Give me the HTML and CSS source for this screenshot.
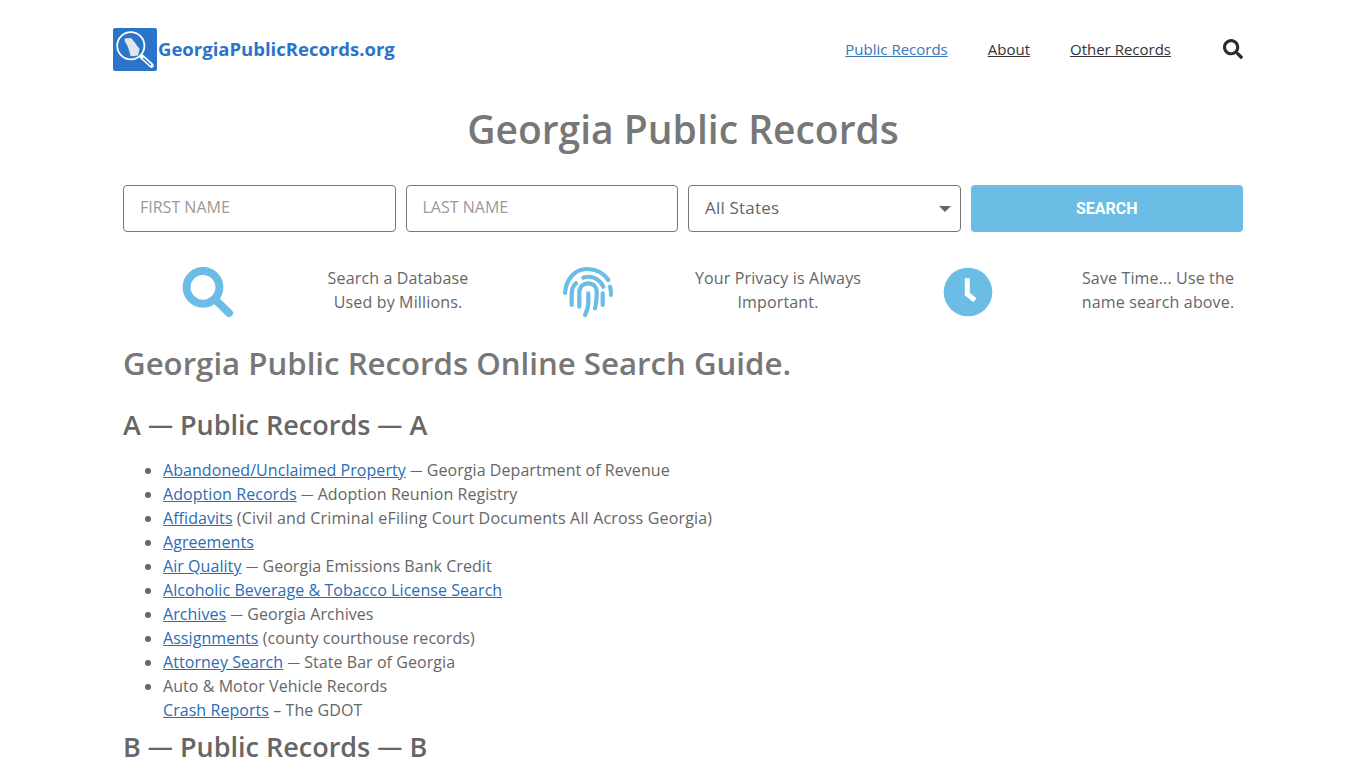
FILE: index.html
```html
<!DOCTYPE html>
<html lang="en">
<head>
<meta charset="utf-8">
<title>Georgia Public Records</title>
<link rel="stylesheet" href="styles.css">
</head>
<body>
<div class="page">
  <header class="site-header">
    <a class="logo" href="#">
      <svg class="logo-mark" viewBox="0 0 44 43" aria-hidden="true">
        <rect width="44" height="43" rx="2" fill="#2a75cb"/>
        <path d="M11.500 10.500l6.500-.5 3.500 4 3.500 5 1.500 1.500-.5 3-1 4-6 .8-1.500-.3-.8-3.500-2-6-3-5.500z" fill="#dfe6ee"/>
        <circle cx="17.800" cy="17.800" r="13.600" fill="none" stroke="#fff" stroke-width="1.800"/>
        <path d="M28.500 28.500L38.500 37.500" stroke="#fff" stroke-width="4.500" stroke-linecap="round"/>
        <path d="M30.500 30.500l7 6.300" stroke="#2a75cb" stroke-width="1.400" stroke-linecap="round"/>
      </svg>
      <span class="logo-text">GeorgiaPublicRecords.org</span>
    </a>
    <nav class="main-nav">
      <a class="nav-link is-active" href="#">Public Records</a>
      <a class="nav-link" href="#">About</a>
      <a class="nav-link" href="#">Other Records</a>
      <a class="nav-search" href="#" aria-label="Search">
        <svg viewBox="0 0 512 512" class="nav-search-icon" aria-hidden="true"><path fill="#2b2b2b" d="M505 442.700L405.300 343c-4.500-4.500-10.600-7-17-7H372c27.600-35.300 44-79.700 44-128C416 93.100 322.900 0 208 0S0 93.100 0 208s93.100 208 208 208c48.300 0 92.700-16.400 128-44v16.300c0 6.400 2.500 12.500 7 17l99.700 99.700c9.400 9.400 24.600 9.400 33.900 0l28.300-28.300c9.400-9.400 9.400-24.600.1-34zM208 336c-70.700 0-128-57.200-128-128 0-70.700 57.200-128 128-128 70.700 0 128 57.200 128 128 0 70.700-57.200 128-128 128z"/></svg>
      </a>
    </nav>
  </header>

  <main class="content">
    <h1 class="page-title">Georgia Public Records</h1>

    <form class="search-form">
      <input class="field" type="text" placeholder="FIRST NAME">
      <input class="field" type="text" placeholder="LAST NAME">
      <div class="select-wrap">
        <select class="field field-select"><option>All States</option></select>
      </div>
      <button class="search-btn" type="button">SEARCH</button>
    </form>

    <section class="features">
      <div class="feature-icon">
        <svg viewBox="0 0 52 52" class="icon" aria-hidden="true"><circle cx="21" cy="21.300" r="16.400" fill="none" stroke="#6bbde5" stroke-width="8"/><path d="M33.500 33.800L47 47" stroke="#6bbde5" stroke-width="8" stroke-linecap="round"/></svg>
      </div>
      <p class="feature-text">Search a Database<br>Used by Millions.</p>
      <div class="feature-icon">
        <svg viewBox="0 0 52 52" class="icon" aria-hidden="true"><g fill="none" stroke="#6bbde5" stroke-width="4.200" stroke-linecap="round"><path d="M3 27C4 13 13 3 25 3c9 0 16.500 4 21.300 11"/><path d="M21.300 11.700c7-2.500 15.500 0 20 9"/><path d="M48 20.700c.8 2.500 1 5.500 1 8.300"/><path d="M14 17.300c-3 2.500-4.300 6.500-4.300 10.500V39"/><path d="M17.300 40.700V26c0-5 4-8.700 9-8.700s8.400 3.500 8.400 8.400c0 5.500-.2 11-1.700 16.600"/><path d="M40.700 27.300V39"/><path d="M26.300 27.300v9c0 4.500-1.300 9-3.300 12.700"/></g></svg>
      </div>
      <p class="feature-text">Your Privacy is Always<br>Important.</p>
      <div class="feature-icon">
        <svg viewBox="0 0 52 52" class="icon" aria-hidden="true"><circle cx="26" cy="26" r="24.300" fill="#6bbde5"/><path d="M25.300 12.300V28l7.700 6.300" fill="none" stroke="#fff" stroke-width="5"/></svg>
      </div>
      <p class="feature-text">Save Time... Use the<br>name search above.</p>
    </section>

    <h2 class="guide-title">Georgia Public Records Online Search Guide.</h2>

    <h3 class="section-title">A <span class="dash">—</span> Public Records <span class="dash">—</span> A</h3>
    <ul class="record-list">
      <li><a href="#">Abandoned/Unclaimed Property</a> <span class="dash">—</span> Georgia Department of Revenue</li>
      <li><a href="#">Adoption Records</a> <span class="dash">—</span> Adoption Reunion Registry</li>
      <li><a href="#">Affidavits</a> <span class="note">(Civil and Criminal eFiling Court Documents All Across Georgia)</span></li>
      <li><a href="#">Agreements</a></li>
      <li><a href="#">Air Quality</a> <span class="dash">—</span> Georgia Emissions Bank Credit</li>
      <li><a href="#">Alcoholic Beverage &amp; Tobacco License Search</a></li>
      <li><a href="#">Archives</a> <span class="dash">—</span> Georgia Archives</li>
      <li><a href="#">Assignments</a> (county courthouse records)</li>
      <li><a href="#">Attorney Search</a> <span class="dash">—</span> State Bar of Georgia</li>
      <li>Auto &amp; Motor Vehicle Records<br><a href="#">Crash Reports</a> – The GDOT</li>
    </ul>
    <h3 class="section-title section-title-next">B <span class="dash">—</span> Public Records <span class="dash">—</span> B</h3>
  </main>
</div>
</body>
</html>
```
FILE: styles.css
```css
* { box-sizing: border-box; }
html, body { margin: 0; padding: 0; }
body {
  font-family: "Open Sans", "Noto Sans", sans-serif;
  font-size: 16px;
  line-height: 24px;
  letter-spacing: .06px;
  color: #666;
  background: #fff;
  height: 768px;
  overflow: hidden;
}
a { color: #2a6db5; }
.page { width: 1140px; margin: 0 auto; }

.site-header {
  display: flex;
  justify-content: space-between;
  align-items: center;
  height: 99px;
  padding-bottom: 1px;
}
.logo { display: flex; align-items: center; gap: 1px; text-decoration: none; }
.logo-mark { width: 44px; height: 43px; display: block; }
.logo-text { font-weight: 700; font-size: 18.500px; letter-spacing: 0; color: #2a75cb; }
.main-nav { display: flex; align-items: center; gap: 40px; padding-right: 10px; }
.nav-link { color: #333; font-size: 15px; letter-spacing: 0; }
.nav-link.is-active { color: #3a76b8; }
.nav-search { display: block; margin-left: 12px; height: 20px; }
.nav-search-icon { width: 20px; height: 20px; display: block; }

.content { padding: 0 10px; }
.page-title {
  margin: 0;
  text-align: center;
  font-size: 39px;
  line-height: 58px;
  font-weight: 600;
  letter-spacing: 0;
  color: #777;
  padding-top: 1px;
}
.search-form {
  display: grid;
  grid-template-columns: repeat(4, 1fr);
  gap: 10px;
  margin-top: 27px;
}
.field {
  width: 100%;
  height: 47px;
  border: 1px solid #777;
  border-radius: 4px;
  padding: 0 16px 3px;
  font: inherit;
  color: #666;
  background: #fff;
}
.field::placeholder { color: #999; opacity: 1; }
.select-wrap { position: relative; }
.field-select {
  appearance: none;
  -webkit-appearance: none;
  font-size: 17px;
  letter-spacing: .2px;
  padding-bottom: 1px;
}
.select-wrap::after {
  content: "";
  position: absolute;
  right: 10px;
  top: 21px;
  border-left: 6px solid transparent;
  border-right: 6px solid transparent;
  border-top: 6px solid #666;
}
.search-btn {
  height: 47px;
  border: 0;
  border-radius: 4px;
  background: #6bbde5;
  color: #fff;
  font-family: Roboto, sans-serif;
  font-weight: 700;
  font-size: 16px;
}

.features {
  display: grid;
  grid-template-columns: repeat(6, 190px);
  margin: 22px -10px 0;
  height: 80px;
  align-items: start;
}
.feature-icon { display: flex; justify-content: center; padding-top: 12px; }
.icon { width: 52px; height: 52px; display: block; }
.feature-text { margin: 12px 0 0; text-align: center; letter-spacing: .15px; }

.guide-title {
  margin: 7px 0 0;
  font-size: 31.200px;
  line-height: 44px;
  font-weight: 600;
  letter-spacing: 0;
  color: #777;
}
.section-title {
  margin: 20px 0 0;
  font-size: 27px;
  line-height: 40px;
  font-weight: 600;
  letter-spacing: 0;
  color: #666;
}
.section-title-next { margin-top: 5px; }
.dash { font-size: .78em; line-height: 1; vertical-align: 1px; }
.section-title .dash { font-size: .93em; }
.record-list { margin: 13px 0 0; padding-left: 40px; }
.note { letter-spacing: .17px; }
```
